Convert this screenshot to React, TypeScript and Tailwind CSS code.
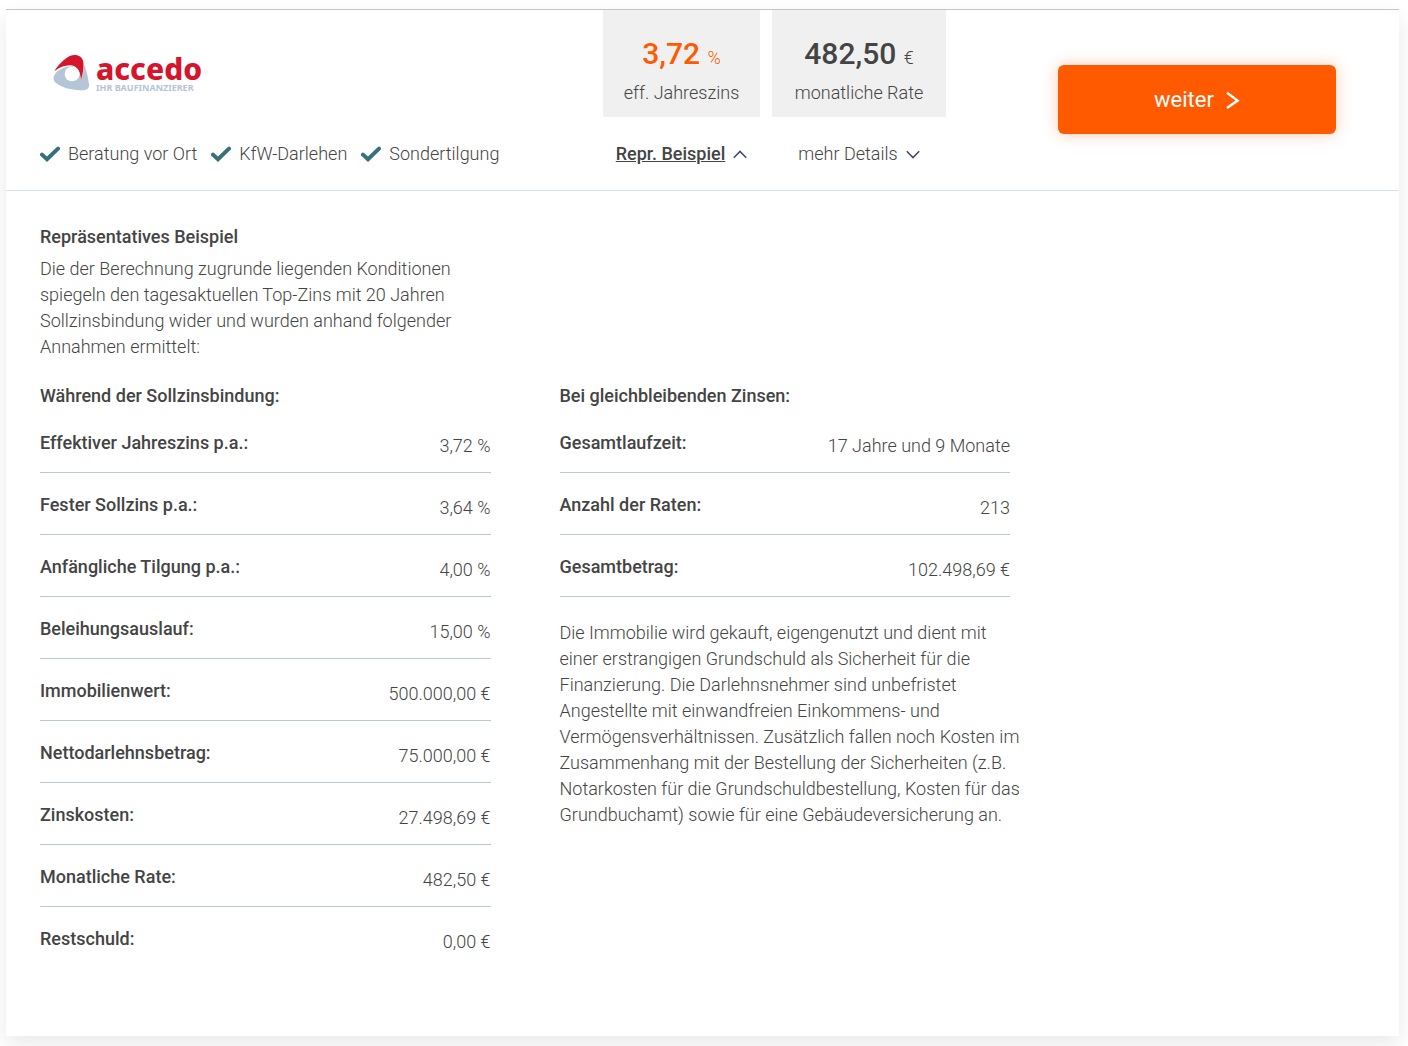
import { useState } from "react";

const features = ["Beratung vor Ort", "KfW-Darlehen", "Sondertilgung"];

const fixedPeriod = [
  { label: "Effektiver Jahreszins p.a.:", value: "3,72 %" },
  { label: "Fester Sollzins p.a.:", value: "3,64 %" },
  { label: "Anfängliche Tilgung p.a.:", value: "4,00 %" },
  { label: "Beleihungsauslauf:", value: "15,00 %" },
  { label: "Immobilienwert:", value: "500.000,00 €" },
  { label: "Nettodarlehnsbetrag:", value: "75.000,00 €" },
  { label: "Zinskosten:", value: "27.498,69 €" },
  { label: "Monatliche Rate:", value: "482,50 €" },
  { label: "Restschuld:", value: "0,00 €" },
];

const constantRates = [
  { label: "Gesamtlaufzeit:", value: "17 Jahre und 9 Monate" },
  { label: "Anzahl der Raten:", value: "213" },
  { label: "Gesamtbetrag:", value: "102.498,69 €" },
];

function Logo() {
  return (
    <div className="flex items-start gap-[7px]">
      <svg width="36" height="37" viewBox="0 0 108 111" aria-hidden="true">
        <path
          d="M2 70C6 52 30 38 54 36C72 38 82 56 82 82C88 66 94 50 93 30C100 50 106 70 108 92C109 106 98 110 82 109C54 108 26 100 10 88C2 81 1 76 2 70Z"
          fill="#b4c5d5"
        />
        <path
          d="M4 52C14 34 34 14 50 6C66 -1 88 2 91 25C93 45 89 62 83 80C84 55 74 36 54 34C35 34 18 40 4 52Z"
          fill="#d5152b"
        />
        <path d="M3 56C18 42 36 36 54 36" fill="none" stroke="#fff" strokeWidth="2" />
        <circle cx="57" cy="60" r="22" fill="#fff" />
      </svg>
      <div className="flex flex-col">
        <span className="font-['Noto_Sans',sans-serif] text-[30px]/[30px] font-extrabold text-[#d5152b]">accedo</span>
        <span className="font-['Noto_Sans',sans-serif] text-[9px]/[8px] font-bold text-[#b4c5d5]">
          IHR BAUFINANZIERER
        </span>
      </div>
    </div>
  );
}

function CheckIcon() {
  return (
    <svg width="20" height="16" viewBox="0 0 20 16" fill="none" className="shrink-0" aria-hidden="true">
      <path d="M2 8.6L7 13.2L18 2.6" stroke="#35717b" strokeWidth="4" strokeLinecap="round" />
    </svg>
  );
}

function Chevron({ up = false }: { up?: boolean }) {
  return (
    <svg
      width="14"
      height="9"
      viewBox="0 0 14 9"
      fill="none"
      stroke="#3f4a68"
      strokeWidth="1.5"
      className="shrink-0"
      aria-hidden="true"
    >
      <path d={up ? "M0.8 7.8L7 1.4L13.2 7.8" : "M0.8 1.2L7 7.6L13.2 1.2"} />
    </svg>
  );
}

function DetailList({ rows, openEnd = false }: { rows: { label: string; value: string }[]; openEnd?: boolean }) {
  return (
    <dl>
      {rows.map((row, i) => (
        <div
          key={row.label}
          className={`flex justify-between border-b pt-[19px] pb-[13px] ${
            openEnd && i === rows.length - 1 ? "border-transparent" : "border-[#b9c8d6]"
          }`}
        >
          <dt className="font-medium">{row.label}</dt>
          <dd className="pt-[3px] text-right">{row.value}</dd>
        </div>
      ))}
    </dl>
  );
}

export default function App() {
  const [open, setOpen] = useState(true);

  return (
    <div className="bg-white pt-[9px] pr-[9px] pb-[10px] pl-[6px] font-[Roboto,sans-serif] text-lg/[26px] font-light text-[#444]">
      <article className="border-t border-[#c4c4c4] bg-white shadow-[0_8px_20px_rgba(0,0,0,0.09)]">
        <header className="flex items-start border-b border-[#cde5f2] pl-[34px] pr-[63px]">
          <div className="flex flex-1 flex-col self-stretch justify-between pt-[44px] pb-[23px]">
            <div className="pl-[13px]">
              <Logo />
            </div>
            <ul className="flex gap-[14px] whitespace-nowrap">
              {features.map((feature) => (
                <li key={feature} className="flex items-center gap-2">
                  <CheckIcon />
                  {feature}
                </li>
              ))}
            </ul>
          </div>

          <div className="flex gap-3 pb-[23px]">
            <div className="flex w-[157px] flex-col items-center gap-6">
              <div className="w-full bg-[#f0f0f0] pt-[27px] pb-[11px] text-center">
                <p className="text-[30px]/[34px] font-medium text-[#ff5a00]">
                  3,72 <span className="text-lg/[18px] font-light">%</span>
                </p>
                <p className="pt-[9px]">eff. Jahreszins</p>
              </div>
              <button
                type="button"
                aria-expanded={open}
                onClick={() => setOpen(!open)}
                className="flex cursor-pointer items-center gap-2 font-medium whitespace-nowrap"
              >
                <span className="underline">Repr. Beispiel</span>
                <Chevron up={open} />
              </button>
            </div>
            <div className="flex w-[174px] flex-col items-center gap-6">
              <div className="w-full bg-[#f0f0f0] pt-[27px] pb-[11px] text-center">
                <p className="text-[30px]/[34px] font-medium">
                  482,50 <span className="text-lg/[18px] font-light">€</span>
                </p>
                <p className="pt-[9px]">monatliche Rate</p>
              </div>
              <button type="button" className="flex cursor-pointer items-center gap-2 whitespace-nowrap">
                mehr Details
                <Chevron />
              </button>
            </div>
          </div>

          <a
            href="#weiter"
            className="mt-[55px] ml-28 flex h-[69px] w-[278px] items-center justify-center gap-3 rounded-md bg-[#ff5a00] text-[22px] font-normal text-white shadow-[0_0_16px_rgba(255,90,0,0.3)]"
          >
            weiter
            <svg width="14" height="18" viewBox="0 0 14 18" fill="none" stroke="#fff" strokeWidth="2.4" aria-hidden="true">
              <path d="M1 1.8L11.6 9.6L1 17" />
            </svg>
          </a>
        </header>

        {open && (
          <section className="px-[34px] pt-[33px] pb-[67px]">
            <div className="grid max-w-[970px] grid-cols-2 gap-x-[69px]">
              <div className="pb-[23px]">
                <h2 className="pb-[6px] font-medium">Repräsentatives Beispiel</h2>
                <p className="max-w-[420px]">
                  Die der Berechnung zugrunde liegenden Konditionen spiegeln den tagesaktuellen Top-Zins mit 20 Jahren
                  Sollzinsbindung wider und wurden anhand folgender Annahmen ermittelt:
                </p>
              </div>
              <div className="col-start-1">
                <h3 className="pb-[2px] font-medium">Während der Sollzinsbindung:</h3>
                <DetailList rows={fixedPeriod} openEnd />
              </div>
              <div>
                <h3 className="pb-[2px] font-medium">Bei gleichbleibenden Zinsen:</h3>
                <DetailList rows={constantRates} />
                <p className="-mr-3 pt-[23px]">
                  Die Immobilie wird gekauft, eigengenutzt und dient mit einer erstrangigen Grundschuld als Sicherheit
                  für die Finanzierung. Die Darlehnsnehmer sind unbefristet Angestellte mit einwandfreien Einkommens-
                  und Vermögensverhältnissen. Zusätzlich fallen noch Kosten im Zusammenhang mit der Bestellung der
                  Sicherheiten (z.B. Notarkosten für die Grundschuldbestellung, Kosten für das Grundbuchamt) sowie für
                  eine Gebäudeversicherung an.
                </p>
              </div>
            </div>
          </section>
        )}
      </article>
    </div>
  );
}
